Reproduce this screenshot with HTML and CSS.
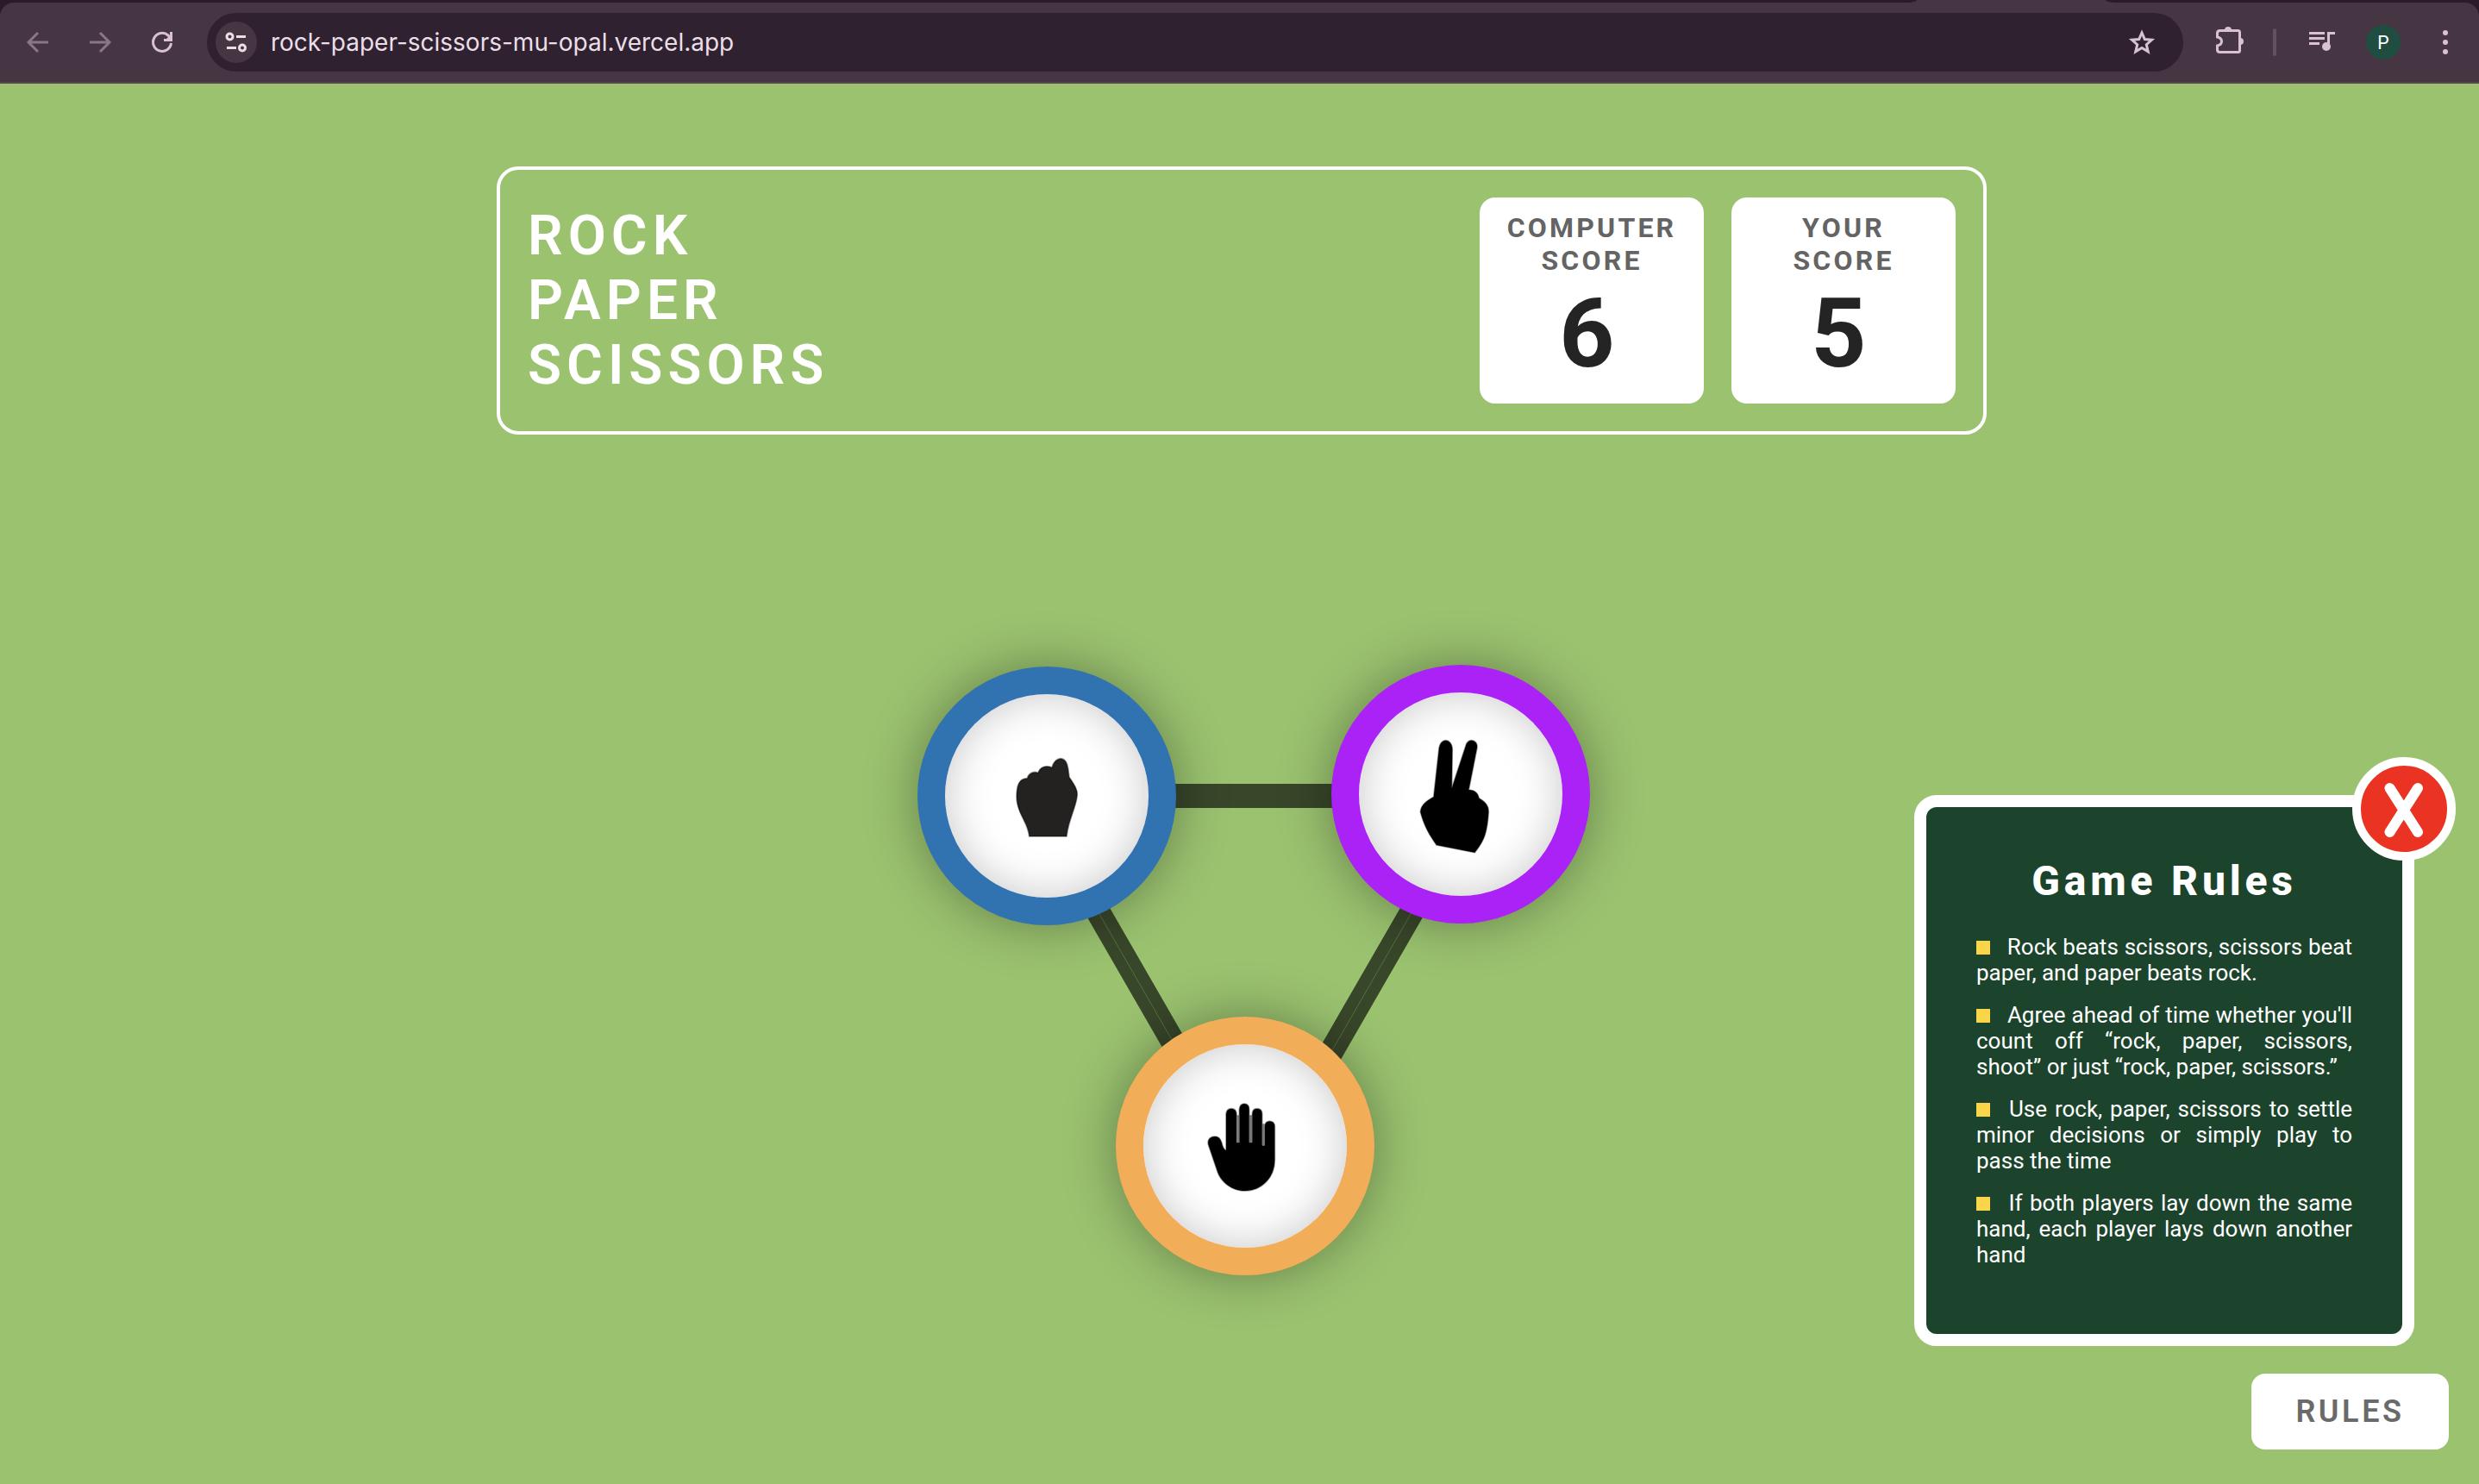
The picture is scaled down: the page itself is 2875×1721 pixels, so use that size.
FILE: index.html
```html
<!DOCTYPE html>
<html lang="en">
<head>
  <meta charset="utf-8">
  <meta name="viewport" content="width=device-width, initial-scale=1">
  <title>Rock Paper Scissors</title>
  <link rel="stylesheet" href="styles.css">
</head>
<body>
  <div class="browser">
    <div class="tabstrip">
      <div class="tabstrip-left"></div>
      <div class="tabstrip-active"></div>
      <div class="tabstrip-right"></div>
    </div>
    <nav class="toolbar" aria-label="Browser">
      <div class="nav-buttons">
        <button class="tool dim" type="button" aria-label="Back">
          <svg viewBox="0 0 48 48"><path d="M36 24H14M24 13L13 24l11 11"/></svg>
        </button>
        <button class="tool dim" type="button" aria-label="Forward">
          <svg viewBox="0 0 48 48"><path d="M12 24h22M24 13l11 11-11 11"/></svg>
        </button>
        <button class="tool" type="button" aria-label="Reload">
          <svg viewBox="0 0 48 48"><path d="M34.500 25A10.500 10.500 0 1 1 31 16l3 3.500"/><path class="fill" d="M36 12v11H26v-3h7v-8z"/><path class="fill" d="M36 13v10H26z"/></svg>
        </button>
      </div>
      <div class="address">
        <button class="site-info" type="button" aria-label="Site information">
          <svg viewBox="0 0 48 48"><circle cx="16.500" cy="17.500" r="3.500"/><path d="M24 17.500h11M13 30.500h11"/><circle cx="31" cy="30.500" r="3.500"/></svg>
        </button>
        <input class="url" type="text" aria-label="Address" value="rock-paper-scissors-mu-opal.vercel.app">
        <button class="tool star" type="button" aria-label="Bookmark">
          <svg viewBox="0 0 48 48"><path d="M24 13l3.300 7.600 8.200.7-6.200 5.400 1.900 8.100-7.200-4.300-7.200 4.300 1.900-8.100-6.200-5.400 8.200-.7z"/></svg>
        </button>
      </div>
      <div class="extras">
        <button class="tool" type="button" aria-label="Extensions">
          <svg viewBox="0 0 48 48"><path d="M12.500 10.500h21q2 0 2 2v21q0 2-2 2h-21q-3 0-3-3v-4.500q5-1 5-5t-5-5v-4.500q0-3 3-3z"/><path class="fill" d="M18 10a4 4 0 0 1 8 0zM36 19a4 4 0 0 1 0 8z"/></svg>
        </button>
        <span class="divider"></span>
        <button class="tool" type="button" aria-label="Media controls">
          <svg viewBox="0 0 48 48"><path d="M9 13.500h18M9 19.500h18M9 25.500h12M31.500 29V13.500H39"/><circle class="fill" cx="29" cy="29" r="5"/></svg>
        </button>
        <button class="avatar" type="button">P</button>
        <button class="tool" type="button" aria-label="Menu">
          <svg viewBox="0 0 48 48"><circle class="fill" cx="24" cy="13" r="3"/><circle class="fill" cx="24" cy="24" r="3"/><circle class="fill" cx="24" cy="35" r="3"/></svg>
        </button>
      </div>
    </nav>
  </div>

  <main class="game">
    <header class="scoreboard">
      <h1 class="title">ROCK<br>PAPER<br>SCISSORS</h1>
      <div class="scores">
        <section class="score">
          <h2 class="score-label">COMPUTER SCORE</h2>
          <p class="score-value">6</p>
        </section>
        <section class="score">
          <h2 class="score-label">YOUR SCORE</h2>
          <p class="score-value">5</p>
        </section>
      </div>
    </header>

    <div class="board">
      <svg class="links" viewBox="0 0 780 708" aria-hidden="true">
        <path class="link" d="M150 152H630M132 152L366 558M651 152L417 558"/>
        <path class="seam" d="M132 152L366 558M651 152L417 558"/>
      </svg>
      <button class="hand rock" type="button" aria-label="Rock">
        <svg viewBox="168 195 708 708"><path d="M461 690C457 640 418 610 417 555C417 515 424 488 454 488C458 472 474 462 492 468C500 448 518 442 540 450C546 428 560 418 572 419C592 422 596 444 600 484C620 512 630 530 628 546C624 590 598 630 591 690Z"/></svg>
      </button>
      <button class="hand scissors" type="button" aria-label="Scissors">
        <svg viewBox="408 188 708 708"><path d="M668 552L686 390C688 364 700 354 711 355C724 356 733 370 733 386L731 522L779 376C783 360 792 354 801 355C814 356 821 368 819 380L790 527C812 528 822 538 826 556C850 570 860 584 859 604C854 680 842 706 811 745L678 719C654 684 636 656 622 604C624 578 646 564 668 552Z"/></svg>
      </button>
      <button class="hand paper" type="button" aria-label="Paper">
        <svg viewBox="318 513 708 708"><path d="M606 882V756Q608 737 624 737Q641 737 642 756V855H652V740Q654 720 669 720Q686 720 686 740V855H697V756Q698 737 713 737Q731 737 731 756V865H740V800Q742 781 757 781Q774 782 775 798V915C775 980 726 1023 672 1023C625 1023 585 990 574 950L544 862C540 842 554 834 567 834C579 834 586 842 590 854Q596 880 606 882Z"/><path class="gap" d="M643 760h9v96h-9zM687 760h9v96h-9zM732 790h8v76h-8z"/></svg>
      </button>
    </div>

    <aside class="rules" aria-label="Game Rules">
      <button class="close" type="button" aria-label="Close">
        <svg viewBox="0 0 100 100"><path d="M33.500 26L66 77M66 26L33.500 77"/></svg>
      </button>
      <h2 class="rules-title">Game Rules</h2>
      <ul class="rules-list">
        <li>
          Rock beats scissors, scissors beat paper, and paper beats rock.
        </li>
        <li>
          Agree ahead of time whether you'll count off “rock, paper, scissors, shoot” or just “rock, paper, scissors.”
        </li>
        <li>
          Use rock, paper, scissors to settle minor decisions or simply play to pass the time
        </li>
        <li>
          If both players lay down the same hand, each player lays down another hand
        </li>
      </ul>
    </aside>
    <button class="rules-button" type="button">RULES</button>
  </main>
</body>
</html>
```
FILE: styles.css
```css
* {
  box-sizing: border-box;
  margin: 0;
  padding: 0;
}

body {
  display: flex;
  flex-direction: column;
  min-height: 100vh;
  background: #9ac26f;
  font-family: Roboto, "Liberation Sans", sans-serif;
}

button {
  border: 0;
  background: none;
  font-family: inherit;
  cursor: pointer;
}

svg {
  display: block;
}

/* Browser chrome */

.browser {
  background: #2a1a2a;
}

.tabstrip {
  display: flex;
  height: 3px;
  background: #463543;
}

.tabstrip-left {
  flex: 1;
  background: #2a1a2a;
  border-bottom-right-radius: 12px 3px;
}

.tabstrip-active {
  width: 219px;
}

.tabstrip-right {
  width: 433px;
  background: #2a1a2a;
  border-bottom-left-radius: 12px 3px;
}

.toolbar {
  display: flex;
  align-items: center;
  height: 94px;
  padding: 0 15px 0 20px;
  background: #463543;
  border-bottom: 2px solid #54454f;
  border-radius: 16px 16px 0 0;
}

.nav-buttons {
  display: flex;
  gap: 24px;
}

.tool {
  flex: none;
  width: 48px;
  height: 48px;
  color: #d9c0d4;
}

.tool svg,
.site-info svg {
  width: 48px;
  height: 48px;
  fill: none;
  stroke: currentColor;
  stroke-width: 3;
}

.tool .fill {
  fill: currentColor;
  stroke: none;
}

.dim {
  color: #8a7685;
}

.address {
  display: flex;
  flex: 1;
  align-items: center;
  height: 68px;
  margin: 0 30px 0 28px;
  padding: 0 24px 0 10px;
  background: #302130;
  border-radius: 34px;
}

.site-info {
  flex: none;
  width: 48px;
  height: 48px;
  background: #463543;
  border-radius: 50%;
  color: #eadfe6;
}

.url {
  flex: 1;
  min-width: 0;
  margin-left: 16px;
  border: 0;
  outline: 0;
  background: none;
  color: #eadfe6;
  font-family: Inter, "Liberation Sans", sans-serif;
  font-size: 28px;
}

.star {
  color: #d3c4cf;
}

.extras {
  display: flex;
  align-items: center;
}

.divider {
  width: 4px;
  height: 32px;
  margin: 0 29px 0 26px;
  border-radius: 2px;
  background: #635160;
}

.avatar {
  width: 40px;
  height: 40px;
  margin: 0 28px 0 27px;
  border-radius: 50%;
  background: #1f4d40;
  color: #fff;
  font-family: Inter, "Liberation Sans", sans-serif;
  font-size: 22px;
}

/* Game page */

.game {
  position: relative;
  flex: 1;
  padding: 96px 571px 240px 576px;
}

.scoreboard {
  display: flex;
  align-items: center;
  justify-content: space-between;
  padding: 32px;
  border: 4px solid #fff;
  border-radius: 25px;
}

.title {
  color: #fff;
  font-size: 64px;
  font-weight: 600;
  line-height: 75px;
  letter-spacing: 6px;
}

.scores {
  display: flex;
  gap: 32px;
}

.score {
  width: 260px;
  padding: 16px 30px;
  background: #fff;
  border-radius: 18px;
  text-align: center;
}

.score-label {
  color: #646464;
  font-size: 32px;
  font-weight: 700;
  line-height: 38px;
  letter-spacing: 0.1em;
}

.score-value {
  color: #242424;
  font-size: 112px;
  font-weight: 700;
  line-height: 131px;
  letter-spacing: 0.1em;
}

.board {
  position: relative;
  width: 780px;
  height: 708px;
  margin: 267px auto 0;
  left: 14px;
}

.links {
  width: 100%;
  height: 100%;
  fill: none;
}

.link {
  stroke: #384629;
  stroke-width: 28;
}

.seam {
  stroke: #56703f;
  stroke-width: 1;
}

.hand {
  position: absolute;
  width: 300px;
  height: 300px;
  border: 32px solid;
  border-radius: 50%;
  background: #fff;
  box-shadow: 0 0 60px rgba(0, 0, 0, 0.35), inset 0 0 50px rgba(0, 0, 0, 0.22);
}

.hand path {
  fill: #000;
  stroke: rgba(0, 0, 0, 0.4);
  stroke-width: 5;
}

.hand .gap {
  fill: #777;
  stroke: none;
}

.rock {
  top: 2px;
  left: 0;
  border-color: #3173b1;
}

.rock path {
  fill: #242220;
}

.scissors {
  top: 0;
  right: 0;
  border-color: #ab22f6;
}

.paper {
  bottom: 0;
  left: 230px;
  border-color: #f2ad59;
}

.rules {
  position: absolute;
  right: 75px;
  bottom: 160px;
  width: 580px;
  padding: 58px;
  border: 14px solid #fff;
  border-radius: 26px;
  background: #1c442c;
  color: #fff;
}

.close {
  position: absolute;
  top: -58px;
  right: -62px;
  width: 120px;
  height: 120px;
  border: 10px solid #fff;
  border-radius: 50%;
  background: #ea3323;
}

.close path {
  fill: none;
  stroke: #fff;
  stroke-width: 12;
  stroke-linecap: round;
}

.rules-title {
  margin-bottom: 33px;
  font-size: 48px;
  font-weight: 800;
  line-height: 56px;
  letter-spacing: 0.1em;
  text-align: center;
}

.rules-list {
  list-style: none;
}

.rules-list li {
  margin-bottom: 19px;
  font-size: 26px;
  line-height: 30px;
  text-align: justify;
}

.rules-list li::before {
  content: "";
  display: inline-block;
  width: 16px;
  height: 16px;
  margin-right: 13px;
  background: #f9d649;
}

.rules-button {
  position: absolute;
  right: 35px;
  bottom: 40px;
  width: 229px;
  height: 88px;
  border-radius: 16px;
  background: #fff;
  color: #6a6a6a;
  font-size: 36px;
  font-weight: 600;
  letter-spacing: 0.1em;
}
```
